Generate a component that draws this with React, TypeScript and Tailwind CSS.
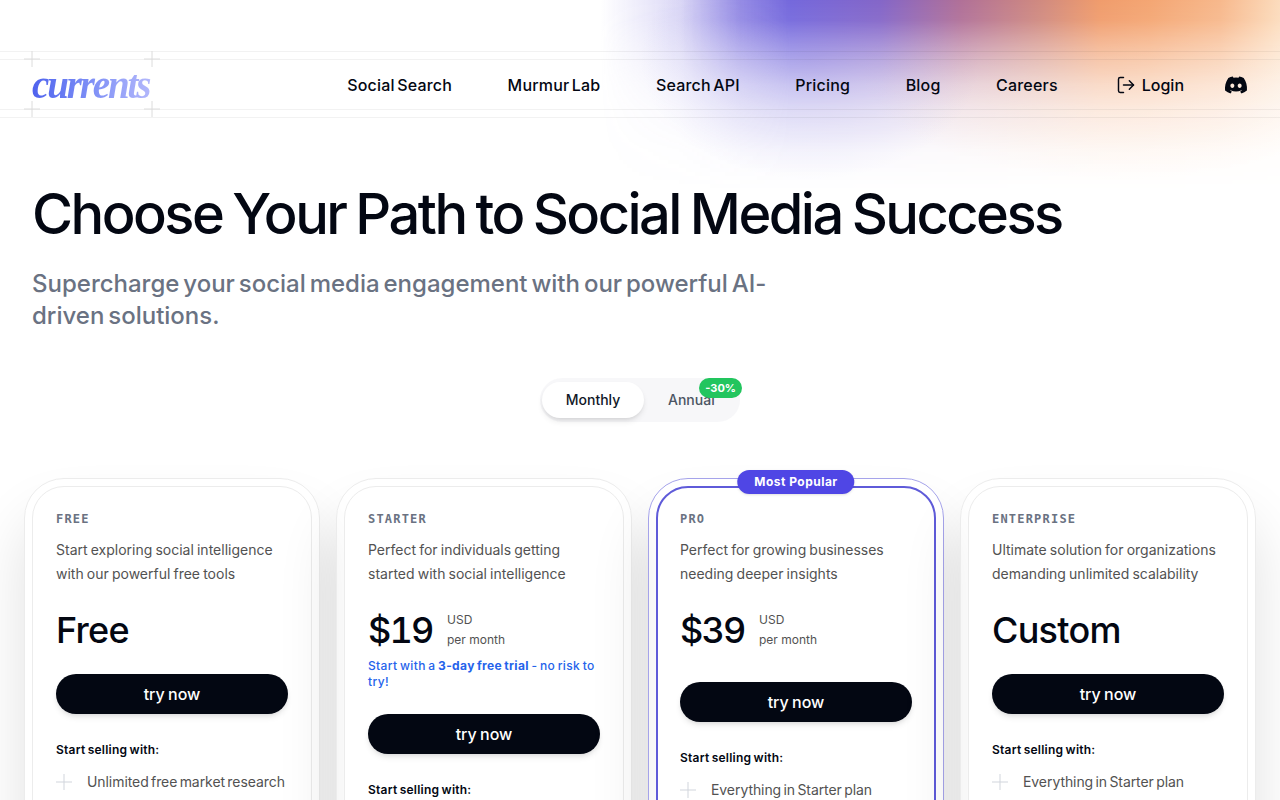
import { LogOut } from 'lucide-react';
import { FaDiscord } from 'react-icons/fa';

const navLinks = ['Social Search', 'Murmur Lab', 'Search API', 'Pricing', 'Blog', 'Careers'];

const plans = [
  {
    name: 'FREE',
    description: ['Start exploring social intelligence', 'with our powerful free tools'],
    price: 'Free',
    feature: 'Unlimited free market research',
  },
  {
    name: 'STARTER',
    description: ['Perfect for individuals getting', 'started with social intelligence'],
    price: '$19',
    perMonth: true,
    trial: true,
  },
  {
    name: 'PRO',
    description: ['Perfect for growing businesses', 'needing deeper insights'],
    price: '$39',
    perMonth: true,
    popular: true,
    feature: 'Everything in Starter plan',
  },
  {
    name: 'ENTERPRISE',
    description: ['Ultimate solution for organizations', 'demanding unlimited scalability'],
    price: 'Custom',
    feature: 'Everything in Starter plan',
  },
];

const Cross = ({ className }: { className: string }) => (
  <svg className={`absolute h-4 w-4 text-[#dcdcdc] ${className}`} viewBox="0 0 16 16" fill="none" stroke="currentColor" strokeWidth="1">
    <path d="M8 0v16M0 8h16" />
  </svg>
);

const Header = () => (
  <header className="relative mt-[51px] border-y border-black/5 py-[7px]">
    <div className="relative flex h-[51px] items-center border-y border-black/5 px-8">
      <Cross className="left-6 top-[-9px]" />
      <Cross className="left-36 top-[-9px]" />
      <Cross className="bottom-[-8px] left-6" />
      <Cross className="bottom-[-8px] left-36" />
      <span className="bg-gradient-to-r from-[#4f62ee] to-[#b5b9fb] bg-clip-text pr-1 font-['Liberation_Serif',serif] text-[39px] leading-none font-bold tracking-[-0.055em] text-transparent italic">
        currents
      </span>
      <nav className="ml-auto flex items-center gap-[55.5px] text-base font-medium tracking-[0.012em] text-[#030712] [word-spacing:-2px]">
        {navLinks.map((link) => (
          <a key={link}>{link}</a>
        ))}
      </nav>
      <a className="ml-[58px] flex items-center gap-1.5 text-base font-medium text-[#030712]">
        <LogOut className="h-5 w-5 text-[#030712]" strokeWidth={1.75} />
        Login
      </a>
      <FaDiscord className="ml-10 h-6 w-6 text-[#030712]" />
    </div>
  </header>
);

const Toggle = () => (
  <div className="mt-[46px] flex">
    <div className="relative ml-[540px] flex h-11 w-[200px] items-center rounded-full bg-gray-100/70 p-0.5 text-sm font-medium">
      <span className="flex h-9 w-[102px] items-center justify-center rounded-full bg-white text-[#111827] shadow-md">Monthly</span>
      <span className="ml-6 text-[#4b5563]">Annual</span>
      <span className="absolute top-0 -right-0.5 rounded-full bg-[#22c55e] px-1.5 py-0.5 text-[11px] leading-4 font-bold text-white">-30%</span>
    </div>
  </div>
);

const PlanCard = ({ plan }: { plan: (typeof plans)[number] }) => (
  <div
    className={`relative rounded-[40px] border p-[7px] shadow-[0_40px_60px_rgba(0,0,0,0.12)] ${
      plan.popular ? 'border-[#a5a3ea]' : 'border-[#ececec]'
    }`}
  >
    {plan.popular && (
      <span className="absolute top-[-9px] left-1/2 z-10 -translate-x-1/2 rounded-full bg-[#4f46e5] px-[17px] py-1 text-xs leading-4 font-bold tracking-[0.04em] whitespace-nowrap text-white shadow-sm">
        Most Popular
      </span>
    )}
    <div
      className={`h-[500px] rounded-[32px] bg-white ${
        plan.popular ? 'border-2 border-[#5f5bd9] px-[22px] py-[22px]' : 'border border-[#ececec] px-[23px] py-[23px]'
      }`}
    >
      <p className="mt-px font-['DejaVu_Sans_Mono',monospace] text-xs leading-4 font-bold tracking-[0.1em] text-gray-500">{plan.name}</p>
      <p className="mt-[11px] text-sm leading-6 text-[#525252] [word-spacing:-0.8px]">
        {plan.description[0]}
        <br />
        {plan.description[1]}
      </p>
      <div className="mt-6 flex h-10 items-start">
        <span
          className={`text-4xl leading-10 font-medium text-[#030712] ${
            plan.perMonth ? 'w-[64px] tracking-[-0.05em] tabular-nums' : 'tracking-[-0.02em]'
          }`}
        >
          {plan.price}
        </span>
        {plan.perMonth && (
          <span className="ml-[15px] text-xs leading-5 text-[#525252]">
            USD
            <br />
            per month
          </span>
        )}
      </div>
      {plan.trial && (
        <p className="mt-2 text-xs leading-4 font-medium tracking-[0.03em] text-[#2563eb] [word-spacing:-1px]">
          Start with a <b className="font-bold">3-day free trial</b> - no risk to try!
        </p>
      )}
      <button
        className={`block h-10 w-full rounded-full bg-[#030712] text-base font-medium text-white shadow-md [word-spacing:-1px] ${
          plan.perMonth && !plan.trial ? 'mt-8' : 'mt-6'
        }`}
      >
        try now
      </button>
      <p className="mt-7 text-xs leading-4 font-semibold tracking-[0.02em] text-[#030712] [word-spacing:-1px]">Start selling with:</p>
      {plan.feature && (
        <div className="mt-[14px] flex items-center gap-[15px] text-sm leading-5 tracking-[-0.005em] whitespace-nowrap text-[#525252] [word-spacing:-1.5px]">
          <svg className="h-4 w-4 shrink-0 text-gray-300" viewBox="0 0 16 16" fill="none" stroke="currentColor" strokeWidth="1">
            <path d="M8 0v16M0 8h16" />
          </svg>
          {plan.feature}
        </div>
      )}
    </div>
  </div>
);

export default function App() {
  return (
    <div className="relative h-[800px] overflow-hidden bg-white font-['Inter',sans-serif]">
      <div className="pointer-events-none absolute inset-x-0 top-0 h-[200px] bg-[radial-gradient(ellipse_170px_120px_at_810px_60px,rgba(116,104,220,0.2),rgba(116,104,220,0)_100%),radial-gradient(ellipse_260px_110px_at_1120px_70px,rgba(248,190,150,0.2),rgba(248,190,150,0)_100%)]" />
      <div className="pointer-events-none absolute inset-x-0 top-0 h-[200px] bg-[linear-gradient(90deg,rgba(116,104,220,0)_600px,rgba(116,104,220,0.25)_680px,rgba(116,104,220,0.75)_740px,#7468dc_790px,#8466c8_880px,#b07098_960px,#d08a80_1040px,#f09c6c_1100px,#f4a673_1150px,#f7b88c_1220px,#fcdcbd_1280px)] [mask-image:linear-gradient(180deg,#000_0px,rgba(0,0,0,0.95)_20px,rgba(0,0,0,0.72)_40px,rgba(0,0,0,0.5)_60px,rgba(0,0,0,0.28)_85px,rgba(0,0,0,0.14)_110px,rgba(0,0,0,0.04)_150px,transparent_190px)]" />
      <div className="relative">
        <Header />
        <main>
          <h1 className="mt-[61px] px-8 text-[56px] leading-[70px] font-medium tracking-[-0.045em] text-[#030712] [word-spacing:-2.5px]">
            Choose Your Path to Social Media Success
          </h1>
          <p className="mt-[19px] max-w-[800px] px-8 text-2xl leading-8 font-medium text-gray-500 [word-spacing:-2.5px]">
            Supercharge your social media engagement with our powerful AI-driven solutions.
          </p>
          <Toggle />
          <div className="mt-14 grid grid-cols-4 gap-4 px-6">
            {plans.map((plan) => (
              <PlanCard key={plan.name} plan={plan} />
            ))}
          </div>
        </main>
      </div>
    </div>
  );
}
